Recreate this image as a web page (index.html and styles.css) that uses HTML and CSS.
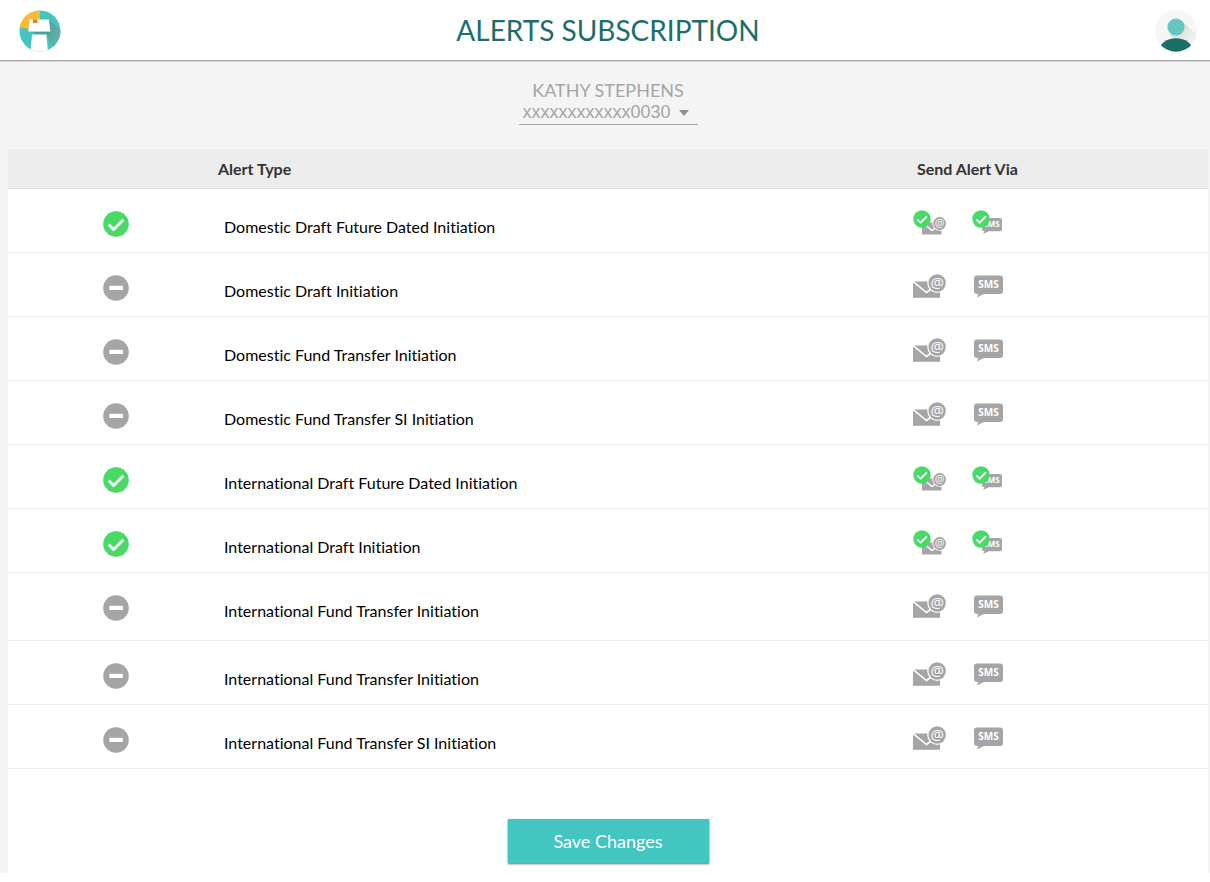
FILE: index.html
```html
<!DOCTYPE html>
<html lang="en">
<head>
<meta charset="utf-8">
<title>Alerts Subscription</title>
<meta name="viewport" content="width=device-width, initial-scale=1">
<link rel="stylesheet" href="styles.css">
</head>
<body>
<svg class="sprite" aria-hidden="true">
  <symbol id="on" viewBox="0 0 26 26">
    <circle cx="13" cy="13" r="12.8" fill="#48d966"/>
    <path d="M5.6 13.6l5 5 9.8-9.8" fill="none" stroke="#fff" stroke-width="2.8"/>
  </symbol>
  <symbol id="off" viewBox="0 0 26 26">
    <circle cx="13" cy="13" r="12.8" fill="#a5a5a5"/>
    <path d="M6.3 10.8h13.6v4.2H6.3z" fill="#fff"/>
  </symbol>
  <symbol id="mail" viewBox="0 0 33 26">
    <path d="M0 7.5h27v16.3H0z" fill="#a5a5a5"/>
    <path d="M-.5 7L13.5 18.5l6-4.5" fill="none" stroke="#fff" stroke-width="1.6"/>
    <circle cx="24.2" cy="9" r="10" fill="#fff"/>
    <circle cx="24.2" cy="9" r="8.7" fill="#a5a5a5"/>
  </symbol>
  <symbol id="mail-on" viewBox="0 0 33 26">
    <path d="M9 12.5h19.5v12H9z" fill="#a5a5a5"/>
    <path d="M9 12l10 8.5 4-3" fill="none" stroke="#fff" stroke-width="1.4"/>
    <circle cx="26.6" cy="13.5" r="7.3" fill="#fff"/>
    <circle cx="26.6" cy="13.5" r="6.4" fill="#a5a5a5"/>
  </symbol>
  <symbol id="sms" viewBox="0 0 32 26">
    <path d="M5 1.5h23a3 3 0 0 1 3 3v12.500a3 3 0 0 1-3 3H12L4.600 23.500l2-3.500H5a3 3 0 0 1-3-3V4.500a3 3 0 0 1 3-3z" fill="#a5a5a5"/>
  </symbol>
  <symbol id="sms-on" viewBox="0 0 32 26">
    <path d="M12 8h16a2 2 0 0 1 2 2v9.300a2 2 0 0 1-2 2H17L11 24l1.500-2.700H12a2 2 0 0 1-2-2V10a2 2 0 0 1 2-2z" fill="#a5a5a5"/>
  </symbol>
  <symbol id="tick" viewBox="0 0 18 18">
    <circle cx="9" cy="9" r="8.700" fill="#48d966"/>
    <path d="M4.300 9.300l3.300 3.300 6.300-6.300" fill="none" stroke="#fff" stroke-width="1.900"/>
  </symbol>
</svg>

<header class="topbar">
  <a class="logo" href="#" aria-label="Home">
    <svg width="42" height="42" viewBox="0 0 42 42">
      <defs>
        <clipPath id="disc"><circle cx="21" cy="21" r="20.5"/></clipPath>
        <linearGradient id="fade" x1="0" y1="0" x2="1" y2="1"><stop offset="0" stop-color="#4f9c95"/><stop offset=".8" stop-color="#62b5ad"/></linearGradient>
      </defs>
      <g clip-path="url(#disc)">
        <path d="M0 0h42v42H0z" fill="#43c5c0"/>
        <path d="M-1 17L21 21V-1H-1z" fill="#ffb833"/>
        <path d="M30 9.500L44 23v14l-8 2-9.500-14-1-3.500z" fill="url(#fade)"/>
        <path d="M13.500 22h17v3h-14z" fill="#46a09b"/>
        <path d="M14 9.500l5.500 1-2 3.500H14z" fill="#c98a22"/>
        <path d="M10.500 9.500h3.500V13h4.500V9.500H30L31.300 21.500H9.300z" fill="#fff"/>
        <path d="M13 24.500h14.500l1.500 18H11.500z" fill="#fff"/>
      </g>
    </svg>
  </a>
  <h1 class="title">ALERTS SUBSCRIPTION</h1>
  <button class="avatar" type="button" aria-label="Profile">
    <svg width="42" height="42" viewBox="0 0 42 42">
      <defs>
        <clipPath id="face"><circle cx="21" cy="21" r="20.700"/></clipPath>
        <linearGradient id="shade" x1="0" y1="0" x2="1" y2="1"><stop offset=".2" stop-color="#dadada"/><stop offset=".8" stop-color="#f5f5f5"/></linearGradient>
      </defs>
      <circle cx="21" cy="21" r="21" fill="#f6f6f6"/>
      <g clip-path="url(#face)">
        <path d="M27 11l17 16v9l-10 4-19-15z" fill="url(#shade)"/>
        <ellipse cx="21" cy="41" rx="17" ry="12.800" fill="#1e6e68"/>
        <circle cx="21" cy="17" r="8.600" fill="#65c6c0"/>
      </g>
    </svg>
  </button>
</header>

<main class="page">
  <section class="account">
    <label class="account-name" for="account">KATHY STEPHENS</label>
    <div class="picker">
      <select id="account" class="picker-select"><option>xxxxxxxxxxxx0030</option></select>
      <svg class="picker-arrow" width="10" height="6" viewBox="0 0 10 6" aria-hidden="true"><path d="M0 0h10L5 6z" fill="#8a9097"/></svg>
    </div>
  </section>

  <form class="panel">
    <table class="alerts">
      <colgroup><col class="col-status"><col class="col-type"><col class="col-via"></colgroup>
      <thead>
        <tr><th></th><th scope="col">Alert Type</th><th scope="col">Send Alert Via</th></tr>
      </thead>
      <tbody>
        <tr>
          <td><svg class="status" role="img" aria-label="Subscribed"><use href="#on"/></svg></td>
          <td>Domestic Draft Future Dated Initiation</td>
          <td><div class="channels"><button type="button" aria-label="Email" aria-pressed="true"><svg class="icon-mail"><use href="#mail-on"/><text x="26.6" y="16.5" class="glyph glyph-at-small">@</text><use href="#tick" width="18" height="18"/></svg></button><button type="button" aria-label="SMS" aria-pressed="true"><svg class="icon-sms"><use href="#sms-on"/><text x="19.5" y="17" class="glyph glyph-sms-small">SMS</text><use href="#tick" width="18" height="18"/></svg></button></div></td>
        </tr>
        <tr>
          <td><svg class="status" role="img" aria-label="Not subscribed"><use href="#off"/></svg></td>
          <td>Domestic Draft Initiation</td>
          <td><div class="channels"><button type="button" aria-label="Email" aria-pressed="false"><svg class="icon-mail"><use href="#mail"/><text x="24.2" y="14" class="glyph glyph-at">@</text></svg></button><button type="button" aria-label="SMS" aria-pressed="false"><svg class="icon-sms"><use href="#sms"/><text x="16.5" y="14" class="glyph glyph-sms">SMS</text></svg></button></div></td>
        </tr>
        <tr>
          <td><svg class="status" role="img" aria-label="Not subscribed"><use href="#off"/></svg></td>
          <td>Domestic Fund Transfer Initiation</td>
          <td><div class="channels"><button type="button" aria-label="Email" aria-pressed="false"><svg class="icon-mail"><use href="#mail"/><text x="24.2" y="14" class="glyph glyph-at">@</text></svg></button><button type="button" aria-label="SMS" aria-pressed="false"><svg class="icon-sms"><use href="#sms"/><text x="16.5" y="14" class="glyph glyph-sms">SMS</text></svg></button></div></td>
        </tr>
        <tr>
          <td><svg class="status" role="img" aria-label="Not subscribed"><use href="#off"/></svg></td>
          <td>Domestic Fund Transfer SI Initiation</td>
          <td><div class="channels"><button type="button" aria-label="Email" aria-pressed="false"><svg class="icon-mail"><use href="#mail"/><text x="24.2" y="14" class="glyph glyph-at">@</text></svg></button><button type="button" aria-label="SMS" aria-pressed="false"><svg class="icon-sms"><use href="#sms"/><text x="16.5" y="14" class="glyph glyph-sms">SMS</text></svg></button></div></td>
        </tr>
        <tr>
          <td><svg class="status" role="img" aria-label="Subscribed"><use href="#on"/></svg></td>
          <td>International Draft Future Dated Initiation</td>
          <td><div class="channels"><button type="button" aria-label="Email" aria-pressed="true"><svg class="icon-mail"><use href="#mail-on"/><text x="26.6" y="16.5" class="glyph glyph-at-small">@</text><use href="#tick" width="18" height="18"/></svg></button><button type="button" aria-label="SMS" aria-pressed="true"><svg class="icon-sms"><use href="#sms-on"/><text x="19.5" y="17" class="glyph glyph-sms-small">SMS</text><use href="#tick" width="18" height="18"/></svg></button></div></td>
        </tr>
        <tr>
          <td><svg class="status" role="img" aria-label="Subscribed"><use href="#on"/></svg></td>
          <td>International Draft Initiation</td>
          <td><div class="channels"><button type="button" aria-label="Email" aria-pressed="true"><svg class="icon-mail"><use href="#mail-on"/><text x="26.6" y="16.5" class="glyph glyph-at-small">@</text><use href="#tick" width="18" height="18"/></svg></button><button type="button" aria-label="SMS" aria-pressed="true"><svg class="icon-sms"><use href="#sms-on"/><text x="19.5" y="17" class="glyph glyph-sms-small">SMS</text><use href="#tick" width="18" height="18"/></svg></button></div></td>
        </tr>
        <tr class="group-end">
          <td><svg class="status" role="img" aria-label="Not subscribed"><use href="#off"/></svg></td>
          <td>International Fund Transfer Initiation</td>
          <td><div class="channels"><button type="button" aria-label="Email" aria-pressed="false"><svg class="icon-mail"><use href="#mail"/><text x="24.2" y="14" class="glyph glyph-at">@</text></svg></button><button type="button" aria-label="SMS" aria-pressed="false"><svg class="icon-sms"><use href="#sms"/><text x="16.5" y="14" class="glyph glyph-sms">SMS</text></svg></button></div></td>
        </tr>
        <tr>
          <td><svg class="status" role="img" aria-label="Not subscribed"><use href="#off"/></svg></td>
          <td>International Fund Transfer Initiation</td>
          <td><div class="channels"><button type="button" aria-label="Email" aria-pressed="false"><svg class="icon-mail"><use href="#mail"/><text x="24.2" y="14" class="glyph glyph-at">@</text></svg></button><button type="button" aria-label="SMS" aria-pressed="false"><svg class="icon-sms"><use href="#sms"/><text x="16.5" y="14" class="glyph glyph-sms">SMS</text></svg></button></div></td>
        </tr>
        <tr>
          <td><svg class="status" role="img" aria-label="Not subscribed"><use href="#off"/></svg></td>
          <td>International Fund Transfer SI Initiation</td>
          <td><div class="channels"><button type="button" aria-label="Email" aria-pressed="false"><svg class="icon-mail"><use href="#mail"/><text x="24.2" y="14" class="glyph glyph-at">@</text></svg></button><button type="button" aria-label="SMS" aria-pressed="false"><svg class="icon-sms"><use href="#sms"/><text x="16.5" y="14" class="glyph glyph-sms">SMS</text></svg></button></div></td>
        </tr>
      </tbody>
    </table>
    <div class="actions"><button class="save" type="submit">Save Changes</button></div>
  </form>
</main>
</body>
</html>
```
FILE: styles.css
```css
* { box-sizing: border-box; }

body {
  margin: 0;
  background: #fff;
  color: #000;
  font-family: Lato, "Open Sans", sans-serif;
  font-size: 16px;
  font-variant-ligatures: none;
}

.sprite { position: absolute; width: 0; height: 0; }

button { padding: 0; border: 0; background: none; font: inherit; cursor: pointer; }
svg { display: block; }

.topbar {
  position: relative;
  display: grid;
  grid-template-columns: 1fr auto 1fr;
  align-items: start;
  padding: 10px 13px 8px 19px;
  border-bottom: 1px solid #a8a8a8;
  box-shadow: 0 1px 0 #d4d4d4;
}
.logo { justify-self: start; }
.avatar { justify-self: end; }
.title {
  margin: 0;
  color: #1c6e69;
  font-size: 28px;
  font-weight: 400;
  line-height: 40px;
}

.page { padding: 18px 2px 0 8px; background: #f4f4f4; }

.account {
  display: flex;
  flex-direction: column;
  align-items: center;
  padding-bottom: 24px;
  color: #a5a5a5;
  font-size: 18px;
}
.account-name { line-height: 22px; }
.picker { position: relative; padding-bottom: 1px; border-bottom: 1px solid #a5a5a5; }
.picker-select {
  display: block;
  width: 179px;
  height: 22px;
  padding: 0 24px 0 4px;
  border: 0;
  appearance: none;
  background: transparent;
  color: inherit;
  font: 18px/22px "Liberation Sans", Arial, sans-serif;
}
.picker-arrow { position: absolute; top: 9px; right: 9px; pointer-events: none; }

.panel { background: #fff; }

.alerts { width: 100%; border-collapse: separate; border-spacing: 0; table-layout: fixed; }
.col-status { width: 17%; }
.col-type { width: 58%; }

th {
  height: 40px;
  padding: 0 6px;
  border-bottom: 1px solid #d5dfe8;
  background: #ececec;
  color: #333;
  font-weight: 700;
  text-align: left;
}
th:last-child { padding-left: 9px; }

td {
  height: 64px;
  padding: 12px 0 0 12px;
  border-bottom: 1px solid #ececec;
}
td:first-child { padding: 6px 0 0 12px; }
td:last-child { padding: 5px 0 0 5px; }
.group-end td { height: 68px; padding-bottom: 4px; }
.group-end td:first-child, .group-end td:last-child { padding-bottom: 4px; }

.status { width: 26px; height: 26px; margin: 0 auto; }
.channels { display: flex; gap: 26px; }
.icon-mail { width: 33px; height: 26px; overflow: visible; }
.icon-sms { width: 32px; height: 26px; overflow: visible; }

.glyph { fill: #fff; font-family: "Open Sans", sans-serif; text-anchor: middle; }
.glyph-at { font-size: 15px; }
.glyph-at-small { font-size: 11px; }
.glyph-sms { font-size: 10px; font-weight: 700; }
.glyph-sms-small { font-size: 8px; font-weight: 700; }

.actions { display: flex; justify-content: center; padding: 50px 0 10px; }
.save {
  width: 201px;
  height: 44px;
  background: #43c5c0;
  box-shadow: 0 1px 2px rgba(0, 0, 0, .6);
  color: #fff;
  font-size: 18px;
}
```
